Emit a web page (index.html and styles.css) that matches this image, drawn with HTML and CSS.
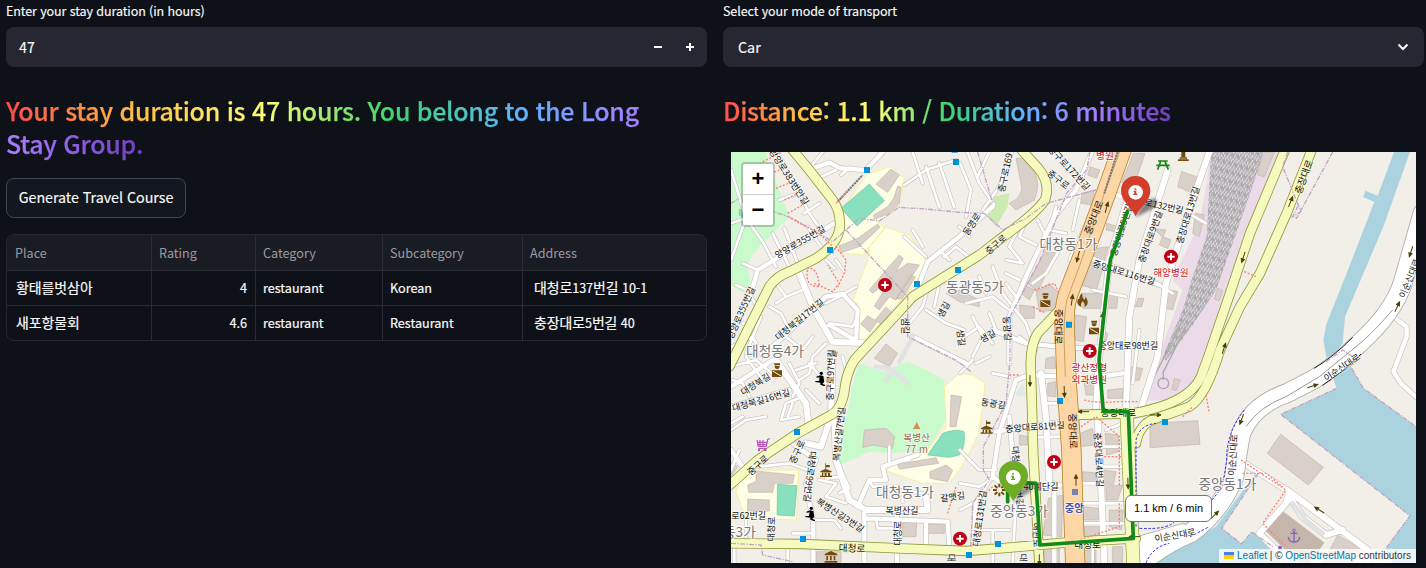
FILE: index.html
```html
<!DOCTYPE html>
<html lang="ko">
<head>
<meta charset="utf-8">
<title>Travel Course</title>
<link rel="stylesheet" href="styles.css">
</head>
<body>
<main class="columns">
  <section class="column">
    <label class="label">Enter your stay duration (in hours)</label>
    <div class="field field-number">
      <span class="value">47</span>
      <svg class="step" viewBox="0 0 8 8"><path d="M0 4h8"/></svg>
      <svg class="step" viewBox="0 0 8 8"><path d="M0 4h8M4 0v8"/></svg>
    </div>
    <h3 class="title"><span class="rainbow">Your stay duration is 47 hours. You belong to the Long Stay Group.</span></h3>
    <button class="button">Generate Travel Course</button>
    <table class="grid">
      <colgroup><col class="c-place"><col class="c-rating"><col class="c-cat"><col class="c-sub"><col></colgroup>
      <thead><tr><th>Place</th><th>Rating</th><th>Category</th><th>Subcategory</th><th>Address</th></tr></thead>
      <tbody>
        <tr><td class="name"><span class="ko">황태를벗삼아</span></td><td class="num">4</td><td>restaurant</td><td>Korean</td><td class="addr"><span class="ko">대청로</span>137<span class="ko">번길</span> 10-1</td></tr>
        <tr><td class="name"><span class="ko">새포항물회</span></td><td class="num">4.6</td><td>restaurant</td><td>Restaurant</td><td class="addr"><span class="ko">충장대로</span>5<span class="ko">번길</span> 40</td></tr>
      </tbody>
    </table>
  </section>
  <section class="column">
    <label class="label">Select your mode of transport</label>
    <div class="field field-select">
      <span class="value">Car</span>
      <svg class="chevron" viewBox="0 0 12 8"><path d="M1.5 1.5L6 6l4.500-4.500"/></svg>
    </div>
    <h3 class="title"><span class="rainbow">Distance: 1.1 km / Duration: 6 minutes</span></h3>
    <div class="map">
<svg class="tiles" viewBox="15 6 2055 1233" width="685" height="411">
<defs>
  <pattern id="rails" width="18" height="26" patternUnits="userSpaceOnUse" patternTransform="rotate(17)">
    <rect width="18" height="26" fill="#b3b0b3"/>
    <path d="M2 0v9M8 9v9M14 16v9M5 20v6M11 1v5" stroke="#f0ebf0" stroke-width="3"/>
    <path d="M5 3v10M11 12v10M17 6v10" stroke="#9a9a9a" stroke-width="2"/>
  </pattern>
  <g id="lanes">
    <path d="M15 220L60 205L110 275M15 330L60 205L15 60M205 100L250 190L275 225M215 130L160 150M235 190L280 160M110 275L150 350M140 250L190 350M175 235L215 340M245 230L285 290M265 90L330 60M290 6L250 55M345 75L372 52M50 340L95 360M535 105L600 60L690 30M600 50L640 170M640 40L685 172M590 100L560 6M535 260L600 320M560 240L590 290M610 400L590 470L550 520M600 480L660 520L715 540M640 400L625 470M655 320L690 290L740 330M640 300L670 330M700 230L730 260M30 405L75 425M75 440L100 480M150 400L180 440L150 460M180 440L230 420M130 470L165 490L190 540M15 590L80 560L110 620M90 530L50 520M105 500L60 610M180 560L230 600L260 560M260 620L300 580M310 520L380 530L395 500M390 410L340 440L300 460M330 330L355 365M300 330L325 355"/>
    <path d="M722 0L760 100L805 165M702 40L735 120L720 200M790 6L755 80M860 0L820 110L770 180M900 215L880 260L930 285M870 250L850 290L890 340L840 330M990 170L970 240L1020 250M1060 150L1040 240M935 210L960 260M800 350L830 430L900 520M720 460L800 440L850 480M760 380L780 430M880 390L840 370M840 400L870 440M715 560L760 530L800 580M740 500L770 560L740 620M790 490L810 540L860 560M860 470L900 520L920 580M880 560L930 600M920 400L960 370L1000 300"/>
    <path d="M15 650L90 630L150 680M60 620L110 690M70 740L50 700L20 690M120 800L60 810L15 840M165 810L180 760L230 740M190 640L220 700L200 740M250 640L300 700M240 720L280 760M15 820L50 800M210 660L270 640M165 810L220 800M185 800L200 760M260 620L250 670L220 690M350 620L360 660M100 950L190 940L245 960M280 990L330 1000L300 1040L360 1060M300 985L350 980M270 1110L325 1110L345 1135M200 1150L262 1150M450 1105L455 1135L500 1135M550 930L490 940L490 890M530 1055L530 1020L590 1030M15 960L40 900M60 1100L60 1160M25 1190V1240M185 1190V1240M365 1015L340 1030M430 990L440 1010L530 1010M370 1015L345 960"/>
    <path d="M702 900L760 960L810 960M702 670L740 630M750 640L790 620M800 670L850 680M702 1000L760 1010L800 985M740 1060L702 1080M740 1140L850 1140M800 1140V1190M870 1040L860 1240M1010 1000H1130M1060 1060H1200M1060 1120H1200M1115 890H1190M1120 950H1190M1060 1200V1240M1000 860L930 862M960 760H1000M1100 1190V1240M800 1200V1240M1140 840L1190 820M1240 540L1220 700M1100 420L1200 440M1300 405L1340 430M1090 200L1030 330M1370 180L1440 220"/>
  </g>
  <g id="streets">
    <path d="M245 60L310 38L345 55L420 60L470 6M95 360L325 220M95 360L75 430L15 560M140 590L300 440L350 432L395 480L390 572L310 525M850 640V500L900 380L985 200L1050 120L1100 0M580 400L605 335L700 260L800 170M200 880L270 930L240 1000L262 1120V1240M415 1090V1240M415 1105L665 1115L670 1190M600 1190V1115M513 1090V1240M15 900L60 965M15 710L150 625M15 770L190 720M395 1070L430 990L480 990L470 950L575 915M560 560L720 640M740 1200L750 1060L790 990M870 690L820 850L800 980L840 1010L1060 1005M810 845L1010 815M870 690L910 675L1000 680M850 800L870 1040M985 1000V1240M1085 320L1300 405M1150 130L1390 190M1020 595L1230 590M800 540L900 580L1020 592M1050 690L1190 670M2002 500L2042 530V560L2002 665L2025 700L2075 745"/>
  </g>
  <g id="avenues">
    <path d="M215 360L265 480L320 575L420 580M150 630L240 760L248 825M320 620L315 800L285 890L240 880M325 800L330 930L370 1050L420 1080L605 1080L600 1040M945 670L960 800L970 1000M1115 800L1125 1000L1135 1240M1204 150L1150 330L1118 640L1110 780M1325 60L1240 330L1210 500L1200 780M1450 6L1400 150L1320 400L1295 620L1240 790M1555 940L1690 1025L1925 1200V1240M1690 1025L1680 1060L1600 1150L1640 1190L1700 1240M1690 1040L1730 1100L1800 1155L1850 1140"/>
  </g>
  <g id="secondary">
    <path d="M200 0L250 60L320 150Q342 180 342 225Q340 280 270 325L190 365Q150 380 130 410L70 530L10 650M887 0L937 55Q975 100 957 150Q930 190 832 260L760 315L560 440L510 495L385 630Q360 670 355 725Q345 780 315 795L215 850L95 930L0 1015M1010 470L935 550Q915 580 914 640L922 915L940 1240M15 1180L230 1182L520 1195L720 1203L860 1192L1050 1175L1230 1165"/>
    <path d="M1677 0L1572 250L1512 430L1447 620L1425 680Q1390 760 1222 790L1042 795M1757 0L1682 190L1602 370L1542 470L1482 600Q1440 740 1390 770Q1350 785 1290 805Q1240 820 1230 880"/>
  </g>
  <g id="arrow"><path d="M-17 0H12M5-5L16 0L5 5Z"/></g>
  <g id="cross"><circle r="21" fill="#bf0014"/><path d="M-11 0H11M0-11V11" stroke="#fff" stroke-width="6"/></g>
  <g id="officer" fill="#734a08"><path d="M-8-20H9V-14H-8ZM-7-12H8Q8-3 0-3Q-7-3-7-12ZM-15 1H15V21H-15Z"/><path d="M-13 3L14 19" stroke="#f2efe9" stroke-width="3"/></g>
  <g id="hall" fill="#734a08"><path d="M0-20V-15H11V-8H0V-3L17 4V7H-17V4L-2-3V-20ZM-12 8H12V17H18V21H-18V17H-12Z"/><path d="M-6 9V18M4 9V18" stroke="#f2efe9" stroke-width="4"/></g>
  <g id="kneel"><circle cx="1" cy="-17" r="5"/><path d="M-3-11L-14-7L-13-4L-4-5L-6 6H-17V9L-2 11V17L8 21H12V18L4 14L10 9L7-9Z"/></g>
  <g id="pin"><path d="M0-49C-25-49-44-30-44-5C-44 28-13 42 0 72C13 42 44 28 44-5C44-30 25-49 0-49Z"/><circle r="22" fill="#fff"/></g>
  <filter id="soft"><feGaussianBlur stdDeviation="4"/></filter>
</defs>

<rect x="15" y="6" width="2055" height="1233" fill="#f2efe9"/>
<path class="park" d="M15 6H117L190 200L150 240L75 320L65 355L75 400L50 430L15 405ZM400 640L470 665L545 635L600 660L655 690L660 810L605 900L500 910L430 905L336 948L345 870L372 750L385 680Z"/>
<path d="M800 140L850 130L845 170L810 230L775 190Z" fill="#cdebb0"/>
<path class="school" d="M345 180L370 150L425 70L495 50L535 85L525 150L500 190L455 215L475 235L410 315L340 308ZM480 232L550 255L600 330L580 380L530 445L415 572L400 570L395 460L380 455L425 330L430 290ZM655 710L700 670L742 675L777 700L772 760L757 850L735 900L700 960L670 1000L590 1000L480 962L520 925L600 905L660 830ZM50 960H218L212 1110L60 1105L30 1025Z"/>
<path d="M1455 6H1662L1590 180L1560 260L1500 430L1430 630L1400 700L1340 750L1250 752L1290 640L1370 420L1340 390L1420 220L1440 110Z" fill="#ebdbe8"/>
<path d="M1455 6H1615L1545 210L1470 420L1390 540L1320 632L1308 625L1370 480L1400 380L1442 260Z" fill="url(#rails)"/>
<path d="M1365 520L1250 750M1380 530L1310 670M1312 670L1312 690" stroke="#aaa" stroke-width="4" fill="none"/>
<circle cx="1312" cy="700" r="16" fill="none" stroke="#aaa" stroke-width="4"/>
<path class="water" d="M2004 6H2052L1972 230L1857 500L1850 580L1805 640L1792 570L1802 520L1862 370L1945 155L1912 142L1918 122L1955 137ZM1800 625L1832 715L1664 793L2052 1097L1980 1195L2000 1240H2070V830L1912 715L1877 655L1860 590ZM1597 970L1487 1135L1547 1182L1577 1145L1660 1200V1240H1290L1312 1190L1400 1170L1470 1130L1530 1050L1585 975Z"/>

<g class="building">
  <path d="M495 57L520 75L485 127L450 103ZM515 108L526 112L520 160L490 190L445 208L443 195L485 170L503 145ZM455 222L462 232L400 290L345 308L340 288L395 265ZM520 315L532 325L510 365L545 340L580 345L510 450L490 440L460 480L445 468L500 380L440 430L430 420L480 360ZM555 375L568 382L528 447L510 445ZM425 497L453 515L432 546L404 522ZM480 470L495 485L465 522L448 510ZM480 582L515 610L490 650L445 625Z"/>
  <path d="M415 840L480 835L505 860L500 895L440 885L410 893ZM630 923L638 940L520 957L515 943ZM612 965L660 945L680 960L665 995L612 985ZM675 735L707 740L690 830L672 830ZM90 963L205 975L200 1000L145 1000L140 1027H68L65 1005L90 995ZM65 1047L130 1050V1083H65ZM530 1115L572 1118L570 1160H530ZM602 1122H655V1150H602ZM270 1205H345V1240H270ZM15 935L35 950L15 980Z"/>
  <path d="M870 25H895Q955 80 925 150L870 180L850 160Q895 140 885 100ZM1067 130L1105 120L1097 165L1067 160ZM1092 50L1122 60L1112 85L1085 75ZM1222 10H1257L1225 105L1187 98ZM1142 220L1175 230L1167 245L1140 240ZM1090 298L1147 290L1112 420L1065 405ZM1367 65L1412 80L1400 130L1355 110ZM1282 235L1320 240L1310 262ZM1310 260L1335 270L1325 295L1300 285ZM1072 430L1177 430L1172 475L1070 475ZM1047 495L1082 500L1072 575L1045 570ZM1237 445H1254L1247 470H1227ZM1310 415L1355 425L1340 480L1305 470ZM930 425L970 400L1000 430L985 480L940 485ZM960 300L990 310L935 425L905 400ZM890 400L925 420L910 450L885 430ZM880 465L925 470V505H885ZM660 430L700 420L760 450V470L700 455ZM1610 6H1645L1615 80L1595 75ZM1408 190L1435 195L1420 260L1400 250ZM1475 415L1490 420L1480 452L1465 447ZM1120 540L1145 550L1140 575L1115 570Z"/>
  <path d="M960 625L985 620L990 655L957 655ZM965 700L990 695V740L965 738ZM1062 850L1100 835L1108 885L1060 890ZM1137 850L1177 855V905L1142 915ZM967 1045L1010 1035L1007 1160L950 1155ZM1070 965L1122 970L1117 1005L1065 1000ZM1132 960L1170 965L1162 1005H1130ZM1140 1010L1190 1005L1175 1050H1140ZM1072 1070L1117 1075V1110H1072ZM1150 1080H1192L1187 1140L1150 1130ZM1075 1130H1120V1160H1075ZM880 855L905 860V885H880ZM955 1190H1000V1240H955ZM1160 1190H1190V1240H1160ZM1070 1200H1110V1240H1070ZM1272 820L1415 812L1422 883L1272 893ZM1210 650L1250 655L1240 690L1205 695ZM1345 685L1363 690L1350 722L1338 718ZM1075 700L1110 690V735H1080ZM1145 720L1190 715V745H1145Z"/>
  <path d="M1664 853L1792 952L1747 1005L1624 910ZM1835 1155L1902 1195L1880 1240H1790Z"/>
  <path d="M1662 1078L1794 1178L1750 1240H1720L1617 1140Z" fill="#c4b6ab"/>
</g>
<path class="pitch" d="M430 102L475 152L393 228L345 175ZM155 1003L213 1007L205 1098L153 1095ZM650 850Q690 835 714 845Q720 890 700 915L670 922L605 915ZM40 178L55 182L50 200L40 195Z"/>
<path d="M870 730L890 700L900 735L875 740Z" fill="#dfe8ea"/>

<use href="#lanes" class="lane-case"/><use href="#streets" class="street-case"/><use href="#avenues" class="avenue-case"/>
<use href="#lanes" class="lane"/><use href="#streets" class="street"/><use href="#avenues" class="avenue"/>
<path class="grey-lane" d="M480 690L500 660L545 700M560 560L540 600L520 635M490 655L450 650M1700 1060L1740 1110L1790 1150"/>
<path class="white-case" d="M2090 190L2030 400Q2000 490 1900 580Q1830 650 1760 690L1682 730Q1580 765 1545 850Q1535 900 1525 980Q1480 1090 1392 1150Q1320 1180 1250 1235M1250 1185L1370 1150"/>
<path class="white-road" d="M2090 190L2030 400Q2000 490 1900 580Q1830 650 1760 690L1682 730Q1580 765 1545 850Q1535 900 1525 980Q1480 1090 1392 1150Q1320 1180 1250 1235M1250 1185L1370 1150"/>
<path d="M2000 480Q1930 560 1890 590L1780 680L1680 740Q1600 770 1560 830" fill="none" stroke="#999" stroke-width="3"/>
<path d="M1765 655Q1825 618 1880 562M1790 706Q1850 668 1905 612" fill="none" stroke="#222" stroke-width="3"/>

<use href="#secondary" class="sec-case"/><path class="sec-case wide" d="M1202 795L1222 1240"/>
<path class="pri-case" d="M1190 -10L1140 130L1085 280L1035 410Q1012 460 1016 530L1022 700L1036 900L1048 1250"/>
<use href="#secondary" class="sec"/><path class="sec wide" d="M1202 795L1222 1240"/>
<path class="pri" d="M1190 -10L1140 130L1085 280L1035 410Q1012 460 1016 530L1022 700L1036 900L1048 1250"/>
<path d="M1183 0L1135 130L1060 350L1030 430Q1014 460 1014 560L1018 680" fill="none" stroke="#b8862f" stroke-width="2"/>
<path d="M1175 6L1135 130M335 155L410 75" fill="none" stroke="#777" stroke-width="6" stroke-dasharray="7 2"/>

<path class="boundary" d="M15 160L40 145M130 180L200 205L320 275L400 205L460 213L518 172L600 177L700 187L775 190L830 240L900 205L960 160L1110 120M360 240L545 440V560L690 630L735 665M1092 6L1082 60L1022 130L942 330L852 500V630L840 760L772 890V960L790 990L740 1060L735 1190M15 1180L105 1185L110 1215L200 1235M755 6L800 160M1685 6L1670 50L1725 185L1700 200L1715 170M1820 6L1712 205L1697 195M1832 715L1664 793L2052 1097L1980 1195M1877 655L1912 715L2070 830M1800 635L1850 600L1880 620M1597 970L1487 1135L1547 1182L1577 1145L1640 1190"/>
<path class="foot" d="M110 35L165 8M125 75L160 60M150 115L200 95M175 150L215 130M185 190L230 165M195 205L285 255L320 290M330 160L365 120M245 360Q235 410 280 410Q275 350 245 355M265 400L320 425L340 400L305 345M320 310L330 290L360 330L355 370L335 410M1555 365L1590 380M1075 750Q1110 760 1180 755H1235M1065 830L1110 800L1180 860V1010M1135 920H1190M1180 1060V1130L1060 1170M1370 800L1400 770M1440 735L1450 790M1545 930L1680 1020L1610 1120L1680 1190M1550 970L1620 970L1670 1010M780 1030L800 1010M665 1090L690 1010M850 675H880M925 420L985 400L1000 430M920 470L960 490"/>
<path d="M1230 1130V870Q1240 825 1290 820M1240 1135Q1330 1140 1350 1110M1260 1239Q1280 1190 1330 1180M1555 780Q1500 850 1502 930L1490 1010L1450 1060M1392 1160L1450 1130" fill="none" stroke="#2a2af5" stroke-width="3" stroke-dasharray="8 5"/>

<g class="arrows">
  <use href="#arrow" transform="translate(1142 172) rotate(-75)"/><use href="#arrow" transform="translate(1056 320) rotate(105)"/><use href="#arrow" transform="translate(1038 450) rotate(-82)"/><use href="#arrow" transform="translate(1129 505) rotate(-85)"/>
  <use href="#arrow" transform="translate(912 693) rotate(90)"/><use href="#arrow" transform="translate(1015 725) rotate(88)"/><use href="#arrow" transform="translate(1072 785) rotate(180)"/><use href="#arrow" transform="translate(1289 795)"/><use href="#arrow" transform="translate(1050 990) rotate(-90)"/><use href="#arrow" transform="translate(1206 1000) rotate(88)"/><use href="#arrow" transform="translate(940 1230) rotate(90)"/><use href="#arrow" transform="translate(1225 1160) rotate(180)"/>
  <use href="#arrow" transform="translate(1552 322) rotate(108)"/><use href="#arrow" transform="translate(1694 155) rotate(-68)"/><use href="#arrow" transform="translate(1494 595) rotate(-72)"/><use href="#arrow" transform="translate(2055 305) rotate(108)"/><use href="#arrow" transform="translate(2014 470) rotate(-65)"/><use href="#arrow" transform="translate(1760 708) rotate(-18)"/><use href="#arrow" transform="translate(1547 808) rotate(110)"/><use href="#arrow" transform="translate(1466 1095) rotate(-45)"/><use href="#arrow" transform="translate(1780 1080) rotate(212)"/>
</g>

<g class="road-name">
  <text transform="translate(190 80) rotate(57)">앙양로383번안길</text><text transform="translate(222 275) rotate(-30)">앙양로355번길</text><text transform="translate(44 488) rotate(-66)">앙양로355번길</text><text transform="translate(220 508) rotate(-39)">대청북길17번길</text>
  <text transform="translate(652 478) rotate(-62)">샘길</text><text transform="translate(537 527) rotate(90)">샘길</text><text transform="translate(706 563) rotate(82)">샘길</text><text transform="translate(785 558) rotate(-28)">샘길</text><text transform="translate(844 535) rotate(86)">동광길</text><text transform="translate(320 612) rotate(-78)">길</text>
  <text transform="translate(837 68) rotate(-78)">중구로169</text><text transform="translate(1030 54) rotate(47)">중구로172번길</text><text transform="translate(997 88) rotate(38)">중구로</text><text transform="translate(737 222) rotate(-57)">동영로</text><text transform="translate(809 283) rotate(-40)">중구로</text>
  <text transform="translate(1102 202) rotate(-68)" class="big">중앙대로</text><text transform="translate(1314 168) rotate(13)">로132번길</text><text transform="translate(1272 260) rotate(-70)">충장대로9번길</text><text transform="translate(1385 195) rotate(-73)">충장대로13번길</text><text transform="translate(1185 240) rotate(-72)">충장대로5번길</text><text transform="translate(1194 367) rotate(17)">중앙대로116번길</text><text transform="translate(1207 586)">중앙대로98번길</text><text transform="translate(999 530) rotate(91)" class="big">중앙대로</text>
  <text transform="translate(1732 80) rotate(-70)" class="plain">충장대로</text><text transform="translate(2050 385) rotate(-68)">이순신대로</text><text transform="translate(1847 652) rotate(-34)">이순신대로</text><text transform="translate(1520 915) rotate(-86)">이순신대로</text><text transform="translate(1347 1155) rotate(-10)">이순신대로</text>
  <text transform="translate(88 702) rotate(-32)">대청북길</text><text transform="translate(105 750) rotate(-16)">대청북길16번길</text><text transform="translate(313 675) rotate(-88)">중구로97번길</text><text transform="translate(338 852) rotate(-84)">복병산길7번길</text><text transform="translate(95 945) rotate(-42)">중구로</text><text transform="translate(213 905) rotate(-65)">중구로</text><text transform="translate(252 980) rotate(97)">대청로99번길</text><text transform="translate(343 1095) rotate(33)">복병산길3번길</text><text transform="translate(68 1097)">로62번길</text><text transform="translate(135 1137) rotate(-88)">대청로</text><text transform="translate(378 1193) rotate(2)" class="plain">대청로</text><text transform="translate(528 1081)">복병산길</text><text transform="translate(513 1150) rotate(-90)">대청로</text><text transform="translate(680 1040) rotate(-8)">갈맷길</text>
  <text transform="translate(802 760) rotate(8)">동광길</text><text transform="translate(927 830) rotate(-4)">중앙대로81번길</text><text transform="translate(1042 843) rotate(88)" class="big">중앙대로</text><text transform="translate(1119 929) rotate(87)">충장대로4번길</text><text transform="translate(870 925) rotate(86)">대청로</text><text transform="translate(880 1045) rotate(80)">번길</text><text transform="translate(1177 785)" class="plain">충장대로</text><text transform="translate(945 1010)">40계단길</text><text transform="translate(760 1105) rotate(-82)">대청로131번길</text><text transform="translate(932 1155) rotate(88)">해관로</text><text transform="translate(1085 1182)" class="plain">대청로</text><text transform="translate(675 1224) rotate(90)">대</text><text transform="translate(892 1223) rotate(88)">대</text>
</g>
<g class="district">
  <text x="147" y="601">대청동4가</text><text x="747" y="408">동광동5가</text><text x="1027" y="278">대창동1가</text><text x="1504" y="1000">중앙동1가</text><text x="40" y="1142">동3가</text><text x="537" y="1022">대청동1가</text><text x="879" y="1079">중앙동3가</text>
</g>
<g class="poi">
  <g class="clinic"><text x="1335" y="365">해양병원</text><text x="1137" y="16">병원</text><text x="1090" y="650">광산정형</text><text x="1090" y="688">외과병원</text></g>
  <g class="peak"><text x="572" y="861">복병산</text><text x="572" y="897">77 m</text></g>
  <text x="1045" y="1073" class="station">중앙</text>
</g>

<path d="M414 51h18v18h-18zM681 27h18v18h-18zM677 0h18v8h-18zM303 291h18v18h-18zM564 393h18v18h-18zM687 351h18v18h-18zM1020 515h18v18h-18zM204 837h18v18h-18zM222 1158h18v18h-18zM993 744h18v18h-18zM1308 807h18v18h-18zM807 1173h18v18h-18zM720 1206h18v18h-18z" fill="#0092da"/>
<path d="M1038 1017h18v18h-18z" fill="#7981b0"/>
<use href="#cross" x="477" y="405"/><use href="#cross" x="1335" y="320"/><use href="#cross" x="1091" y="603"/><use href="#cross" x="984" y="936"/><use href="#cross" x="702" y="1166"/>
<use href="#officer" x="958" y="450"/><use href="#officer" x="1104" y="532"/><use href="#officer" x="153" y="660"/>
<use href="#hall" x="300" y="960"/><use href="#hall" x="782" y="830"/>
<use href="#kneel" x="285" y="687"/><use href="#kneel" x="255" y="1092"/>
<g fill="#734a08"><path d="M1069 429Q1067 441 1074 449Q1079 447 1078 440Q1088 452 1084 463Q1081 470 1075 471Q1079 462 1070 453Q1063 461 1066 471Q1050 464 1055 449Q1057 444 1060 447Q1059 436 1069 429Z"/><path d="M315 1203L334 1212V1216H296V1212ZM301 1218h5v13h-5zM312 1218h5v13h-5zM323 1218h5v13h-5zM296 1233H334V1238H296Z"/><path d="M1366 3h12v18h-12zM1361 22h22v4h-22zM1356 28h32v5h-32z"/></g>
<path d="M820 1001V1012M820 1028V1039M801 1020H812M828 1020H839M806 1006L814 1014M826 1026L834 1034M834 1006L826 1014M814 1026L806 1034" stroke="#734a08" stroke-width="6"/>
<path d="M93 870L97 890H121L125 868L132 866M94 877H123M95 884H122M102 870V890M111 870V890M97 896H122" stroke="#ac39ac" stroke-width="3" fill="none"/><path d="M96 898h6v5h-6zM115 898h6v5h-6z" fill="#ac39ac"/>
<path d="M572 816L583 837H561Z" fill="#d08f55"/>
<path d="M1296 33H1325M1291 46H1331M1304 34L1295 59M1317 34L1327 59" stroke="#158515" stroke-width="5" fill="none"/>
<path d="M1704 1145V1176M1694 1150H1714M1687 1161Q1688 1176 1704 1176Q1720 1176 1721 1161" stroke="#8461c4" stroke-width="4" fill="none"/><circle cx="1704" cy="1141" r="4" fill="none" stroke="#8461c4" stroke-width="3"/><circle cx="1662" cy="1193" r="6" fill="#8461c4"/>

<path class="route" d="M1204 185L1153 330L1140 440L1119 630L1132 785H1207L1222 1165L942 1185L930 1000L845 995V1055"/>
<path d="M1229 202L1248 165L1282 145Q1305 150 1283 175Z" fill="#000" opacity=".45" filter="url(#soft)"/>
<path d="M862 1055L883 1018L915 1000Q930 1007 910 1027Z" fill="#000" opacity=".4" filter="url(#soft)"/>
<use href="#pin" x="1229" y="127" fill="#d33d2a"/><use href="#pin" x="862" y="982" fill="#6fac25"/>
<path d="M1223 122h8v9h3v4h-12v-4h3v-5h-2zM1225 115h6v4h-6z" fill="#d33d2a"/><path d="M856 977h8v9h3v4h-12v-4h3v-5h-2zM858 970h6v4h-6z" fill="#6fac25"/>
</svg>
      <div class="zoom"><span>+</span><span>−</span></div>
      <div class="tooltip">1.1 km / 6 min</div>
      <div class="credit"><svg class="flag" viewBox="0 0 10 7"><path fill="#4c7be1" d="M0 0h10v3.500H0z"/><path fill="#ffd500" d="M0 3.500h10V7H0z"/></svg><a>Leaflet</a> | © <a>OpenStreetMap</a> contributors</div>
    </div>
  </section>
</main>
</body>
</html>
```
FILE: styles.css
```css
* { box-sizing: border-box; }
body {
  margin: 0;
  height: 568px;
  overflow: hidden;
  background: #0e1117;
  color: #fafafa;
  font-family: "Noto Sans CJK KR", sans-serif;
}
.columns { display: grid; grid-template-columns: 701px 701px; gap: 16px; padding-left: 6px; }
.column { display: flex; flex-direction: column; align-items: flex-start; }
.label { height: 27px; line-height: 21px; font-size: 12.500px; letter-spacing: -.09px; -webkit-text-stroke: .15px; }
.field {
  width: 100%;
  height: 40px;
  display: flex;
  align-items: center;
  border-radius: 8px;
  background: #262730;
  font-size: 14.300px;
  -webkit-text-stroke: .15px;
}
.value { flex: 1; line-height: 40px; }
.field-number { padding: 0 13px; gap: 24px; }
.field-select { padding: 0 15px; }
.step { width: 8px; height: 8px; stroke: #fafafa; stroke-width: 2; }
.chevron { width: 12px; height: 8px; fill: none; stroke: #fafafa; stroke-width: 2; }
.title { margin: 27px 0 0; padding-right: 30px; font-size: 25px; line-height: 33px; font-weight: 500; letter-spacing: -.29px; -webkit-text-stroke: .25px; }
.rainbow {
  background: linear-gradient(to right, #ff4b4b, #ffbd45, #ffff78, #3dd56d, #60b4ff, #a97bff, #6d3fc0);
  -webkit-background-clip: text;
  background-clip: text;
  color: transparent;
}
.button {
  margin-top: 18px;
  width: 180px;
  height: 40px;
  padding: 0 0 2px;
  border: 1px solid #41444c;
  border-radius: 8px;
  background: #131720;
  color: #fafafa;
  font: 14.300px/36px "Noto Sans CJK KR", sans-serif;
  letter-spacing: -.04px;
  -webkit-text-stroke: .15px;
}
.grid {
  width: 701px;
  margin-top: 16px;
  table-layout: fixed;
  border: 1px solid #262930;
  border-radius: 8px;
  border-spacing: 0;
  overflow: hidden;
  font-size: 12.600px;
}
.c-place { width: 145px; }
.c-rating { width: 104px; }
.c-cat { width: 127px; }
.c-sub { width: 140px; }
.grid th, .grid td { padding: 0 8px 0 7px; height: 35px; line-height: 33px; border-right: 1px solid #2a2d33; border-bottom: 1px solid #2a2d33; white-space: nowrap; }
.grid td { padding-bottom: 2px; line-height: 31px; -webkit-text-stroke: .2px; }
.grid th { height: 36px; background: #1a1c24; color: #9a9ba0; font-weight: 400; text-align: left; }
.grid tr > :last-child { border-right: 0; }
.grid th:first-child { padding-left: 8px; }
.grid td.name { padding-left: 9px; }
.grid tbody tr:last-child td { height: 34px; border-bottom: 0; }
.grid td.num { text-align: right; }
.grid tr > td.addr { padding-left: 11px; letter-spacing: -.05px; }
.ko { font-size: 13.900px; line-height: 1; }

.map { position: relative; width: 685px; height: 411px; margin: 25px 0 0 8px; overflow: hidden; }
.tiles { display: block; }
.park { fill: #c8facc; }
.school { fill: #ffffe5; stroke: #f5efa0; stroke-width: 3; }
.water { fill: #aad3df; }
.building { fill: #d9d0c9; stroke: #c3b5aa; stroke-width: 2; }
.pitch { fill: #88e0be; stroke: #6bc4a2; stroke-width: 2; }
.lane, .street, .avenue, .lane-case, .street-case, .avenue-case,
.white-road, .white-case, .sec, .sec-case, .pri, .pri-case, .grey-lane { fill: none; stroke-linejoin: round; stroke-linecap: round; }
.lane-case { stroke: #c8c5c1; stroke-width: 12; }
.lane { stroke: #fff; stroke-width: 8; }
.street-case { stroke: #c8c5c1; stroke-width: 17; }
.street { stroke: #fff; stroke-width: 13; }
.avenue-case { stroke: #c8c5c1; stroke-width: 22; }
.avenue { stroke: #fff; stroke-width: 18; }
.grey-lane { stroke: #e2e2e5; stroke-width: 14; }
.white-case { stroke: #aaa; stroke-width: 60; }
.white-road { stroke: #fff; stroke-width: 55; }
.sec-case { stroke: #8f9a3a; stroke-width: 31; }
.sec { stroke: #f7fabf; stroke-width: 26; }
.sec-case.wide { stroke-width: 42; }
.sec.wide { stroke-width: 38; }
.pri-case { stroke: #b8862f; stroke-width: 61; }
.pri { stroke: #fcd6a4; stroke-width: 56; }
.boundary { fill: none; stroke: #c0a5c4; stroke-width: 4; stroke-dasharray: 15 4 4 4; }
.foot { fill: none; stroke: #fa8072; stroke-width: 4; stroke-dasharray: 6 5; }
.arrows { fill: #4c4008; stroke: #4c4008; stroke-width: 3; }
.road-name text, .district text, .poi text { text-anchor: middle; dominant-baseline: central; paint-order: stroke; stroke-linejoin: round; }
.road-name { font-size: 27px; fill: #111; stroke: rgba(255, 255, 255, .65); stroke-width: 4; }
.road-name .big { font-size: 29px; stroke: #fcd6a4; }
.road-name .plain { font-size: 29px; stroke: #f7fabf; }
.district { font-size: 41px; fill: #777; stroke: rgba(255, 255, 255, .75); stroke-width: 7; }
.poi { font-size: 29px; stroke: rgba(255, 255, 255, .7); stroke-width: 5; }
.clinic { fill: #c3202c; }
.peak { fill: #a3664a; }
.station { fill: #4050b5; font-weight: 700; font-size: 31px; }
.route { fill: none; stroke: #128a18; stroke-width: 11; stroke-linejoin: round; stroke-linecap: round; }

.zoom {
  position: absolute;
  left: 10px;
  top: 10px;
  width: 34px;
  border: 2px solid rgba(0, 0, 0, .2);
  border-radius: 4px;
  background: #fff;
  background-clip: padding-box;
  color: #000;
  font: 700 22px/30px "Liberation Sans", sans-serif;
  text-align: center;
}
.zoom span { display: block; height: 30px; }
.zoom span:first-child { height: 31px; border-bottom: 1px solid #ccc; }
.zoom span:last-child { line-height: 29px; }
.tooltip {
  position: absolute;
  left: 394px;
  top: 343px;
  width: 87px;
  height: 27px;
  border: 1px solid #777;
  border-radius: 6px;
  background: #fff;
  color: #000;
  font: 11px/25px "Liberation Sans", sans-serif;
  text-align: center;
  white-space: nowrap;
}
.credit {
  position: absolute;
  right: 0;
  bottom: 0;
  height: 14px;
  padding: 0 5px;
  background: rgba(255, 255, 255, .8);
  color: #333;
  font: 10px/14px "Liberation Sans", sans-serif;
  white-space: nowrap;
}
.credit a { color: #0078a8; }
.flag { width: 10px; height: 7px; margin-right: 3px; }
```
